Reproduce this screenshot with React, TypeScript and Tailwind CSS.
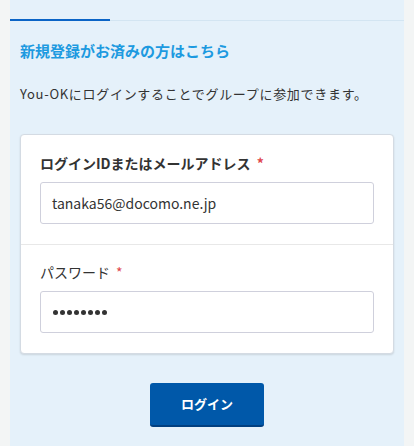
export default function App() {
  const font = { fontFamily: '"Noto Sans CJK JP", "Noto Sans", sans-serif' }
  return (
    <div className="min-h-[446px] w-[414px] bg-[#f3f5f5] px-[10px]" style={font}>
      <div className="min-h-[446px] bg-[#e5f1fa]">
        {/* tabs */}
        <div className="flex items-end pt-[19px]">
          <div className="h-[2px] w-[100px] bg-[#0a64c6]" />
          <div className="h-px flex-1 bg-[#d3e5f2]" />
        </div>

        <div className="px-[10px]">
          <h2 className="mt-[19px] text-[15px] font-bold leading-[22px] text-[#1d9ae0]">
            新規登録がお済みの方はこちら
          </h2>
          <p className="mt-[22px] text-[13px] leading-[20px] tracking-[0.7px] text-[#333]">
            You-OKにログインすることでグループに参加できます。
          </p>

          {/* form card */}
          <div className="mt-[30px] rounded-[4px] border border-[#d4dbe3] bg-white shadow-[0_1px_2px_rgba(0,0,0,0.12)]">
            <div className="px-[19px] pb-[20px] pt-[18px]">
              <label className="flex items-center gap-[6px] text-[14px] font-bold leading-[20px] text-[#333]">
                ログインIDまたはメールアドレス
                <span className="text-[#e0474c]">*</span>
              </label>
              <div className="mt-[9px] flex h-[42px] items-center rounded-[3px] border border-[#cfd0dc] px-[11px] text-[14px] text-[#333]">
                tanaka56@docomo.ne.jp
              </div>
            </div>
            <div className="h-px bg-[#e8e8e8]" />
            <div className="px-[19px] pb-[20px] pt-[17px]">
              <label className="flex items-center gap-[6px] text-[14px] leading-[20px] text-[#333]">
                パスワード
                <span className="text-[#e0474c]">*</span>
              </label>
              <div className="mt-[9px] flex h-[42px] items-center gap-[2px] rounded-[3px] border border-[#cfd0dc] px-[12px]">
                {Array.from({ length: 8 }).map((_, i) => (
                  <span key={i} className="h-[5px] w-[5px] rounded-full bg-[#333]" />
                ))}
              </div>
            </div>
          </div>

          <div className="flex justify-center pt-[29px]">
            <button className="h-[44px] w-[114px] rounded-[3px] border-b-[2px] border-[#003f80] bg-[#0058a9] text-[13px] font-bold text-white">
              ログイン
            </button>
          </div>
        </div>
      </div>
    </div>
  )
}
